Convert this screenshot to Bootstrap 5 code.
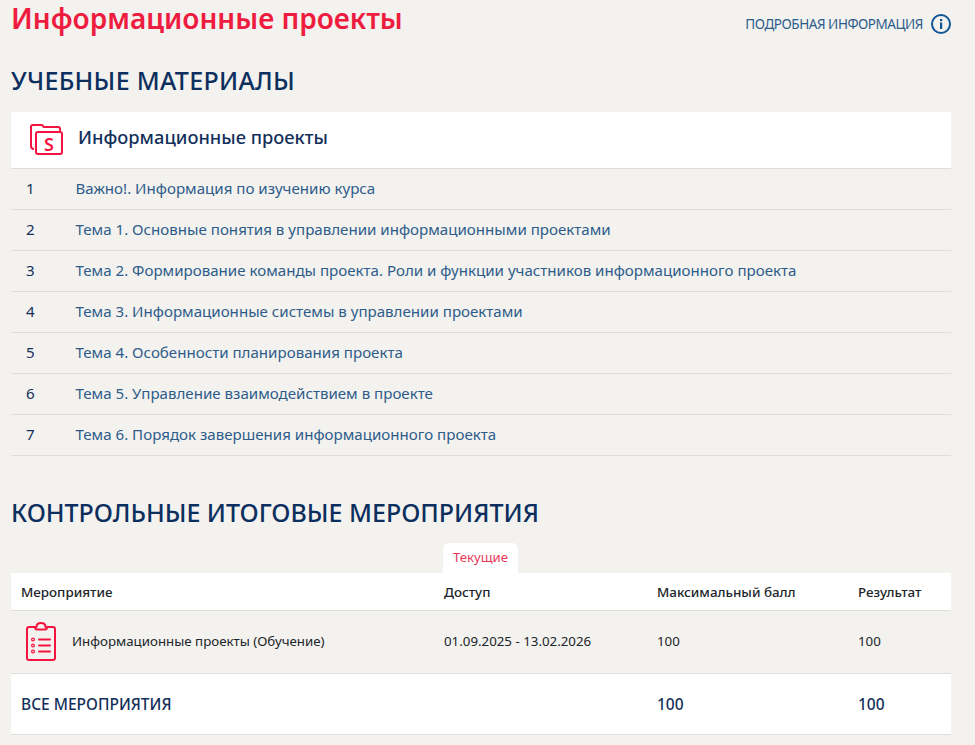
<!DOCTYPE html>
<html lang="ru">
<head>
<meta charset="utf-8">
<title>Информационные проекты</title>
<link href="https://cdn.jsdelivr.net/npm/bootstrap@5.3.0/dist/css/bootstrap.min.css" rel="stylesheet">
<style>
body{background:#f3f2ef;font-family:"Noto Sans",sans-serif;color:#212529;overflow:hidden;}
.page-wrap{padding:0 24px 0 11px;}
.top-bar{padding-bottom:27px;}
.page-title{font-size:28px;line-height:37px;font-weight:600;color:#ee1c3f;margin:0;}
.more-link{font-size:13.5px;letter-spacing:-.45px;color:#2e5c8a;text-decoration:none;margin-top:14px;}
.sec-title{font-size:25px;line-height:32px;font-weight:500;color:#0d2f5e;margin:0;}
.sec-first{margin-bottom:16px;letter-spacing:.3px;}
.sec-second{margin-top:40px;margin-bottom:15px;}
.mat-head{height:57px;background:#fff;border-bottom:1px solid #dfdedb;padding-left:19px;gap:15px;}
.mat-name{font-size:18.3px;font-weight:500;color:#14305a;margin-bottom:6px;}
.mat-row{height:41px;border-bottom:1px solid #dfdedb;font-size:15.1px;padding-bottom:2px;}
.mat-num{width:64.500px;padding-left:15px;color:#14305a;}
.mat-row a{color:#2e5c8a;text-decoration:none;}
.tab-pill{width:75px;height:30px;background:#fff;border-radius:6px 6px 0 0;color:#e8385a;font-size:13.200px;margin-left:432px;}
.res-table{table-layout:fixed;width:100%;margin:0;--bs-table-bg:transparent;font-size:13.300px;color:#212529;}
.res-table td,.res-table th{padding:0 0 0 10px;vertical-align:middle;border-bottom:1px solid #dfdedb;}
.res-table thead tr{height:37px;background:#fff;}
.res-table thead th{font-weight:500;font-size:13.400px;padding-top:1px;}
.res-table .row-main{height:63px;}
.res-table .row-main td+td{padding-top:1px;}
.res-table .row-total{height:61px;background:#fff;}
.res-table .row-total td{font-size:15.500px;font-weight:500;color:#14305a;padding-top:2px;}
.clip-cell{gap:16px;padding-left:5px;}
</style>
</head>
<body>
<div class="page-wrap">
  <div class="top-bar d-flex justify-content-between align-items-start">
    <h1 class="page-title">Информационные проекты</h1>
    <a href="#" class="more-link d-flex align-items-center gap-2">ПОДРОБНАЯ ИНФОРМАЦИЯ
      <svg width="20" height="20" viewBox="0 0 20 20"><circle cx="10" cy="10" r="9" fill="none" stroke="#0f5596" stroke-width="2"/><rect x="9" y="8.500" width="2.200" height="6.500" fill="#0f5596"/><rect x="9" y="5" width="2.200" height="2.200" fill="#0f5596"/></svg>
    </a>
  </div>
  <h2 class="sec-title sec-first">УЧЕБНЫЕ МАТЕРИАЛЫ</h2>
  <div class="mat-head d-flex align-items-center">
    <svg width="33" height="32" viewBox="0 0 33 32" fill="none" stroke="#f5143f" stroke-width="2" stroke-linejoin="round"><path d="M4 25c-2 0-3-1-3-3V3c0-1 .5-2 2-2h9l2 2h14c1.500 0 2 1 2 2v2"/><rect x="6" y="8" width="26" height="22" rx="2"/><text x="19" y="27" text-anchor="middle" font-family="Noto Sans" font-size="18" font-weight="600" fill="#f5143f" stroke="none">S</text></svg>
    <div class="mat-name">Информационные проекты</div>
  </div>
  <div class="mat-row d-flex align-items-center"><div class="mat-num">1</div><a href="#">Важно!. Информация по изучению курса</a></div>
  <div class="mat-row d-flex align-items-center"><div class="mat-num">2</div><a href="#">Тема 1. Основные понятия в управлении информационными проектами</a></div>
  <div class="mat-row d-flex align-items-center"><div class="mat-num">3</div><a href="#">Тема 2. Формирование команды проекта. Роли и функции участников информационного проекта</a></div>
  <div class="mat-row d-flex align-items-center"><div class="mat-num">4</div><a href="#">Тема 3. Информационные системы в управлении проектами</a></div>
  <div class="mat-row d-flex align-items-center"><div class="mat-num">5</div><a href="#">Тема 4. Особенности планирования проекта</a></div>
  <div class="mat-row d-flex align-items-center"><div class="mat-num">6</div><a href="#">Тема 5. Управление взаимодействием в проекте</a></div>
  <div class="mat-row d-flex align-items-center"><div class="mat-num">7</div><a href="#">Тема 6. Порядок завершения информационного проекта</a></div>
  <h2 class="sec-title sec-second">КОНТРОЛЬНЫЕ ИТОГОВЫЕ МЕРОПРИЯТИЯ</h2>
  <div class="tab-pill d-flex align-items-center justify-content-center">Текущие</div>
  <table class="table res-table">
    <colgroup><col style="width:423px"><col style="width:213px"><col style="width:201px"><col></colgroup>
    <thead><tr><th>Мероприятие</th><th>Доступ</th><th>Максимальный балл</th><th>Результат</th></tr></thead>
    <tbody>
      <tr class="row-main">
        <td><div class="clip-cell d-flex align-items-center">
          <svg width="30" height="39" viewBox="0 0 30 39" fill="none" stroke="#f5143f" stroke-width="2" stroke-linecap="round" stroke-linejoin="round"><path d="M9 5H3C1.800 5 1 5.800 1 7v29c0 1.300.7 2 2 2h24c1.300 0 2-.7 2-2V7c0-1.200-.8-2-2-2h-6c0 1.500-.5 2.500-2 2.500h-8C9.500 7.500 9 6.500 9 5z"/><path d="M10.500 5C10.500 2.500 12.500 1 15 1s4.500 1.500 4.500 4"/><circle cx="7" cy="17.500" r="1.400" stroke-width="1.200"/><circle cx="7" cy="23.500" r="1.400" stroke-width="1.200"/><circle cx="7" cy="29.500" r="1.400" stroke-width="1.200"/><path d="M13 17.500h11M13 23.500h11M13 29.500h11"/></svg>
          <span>Информационные проекты (Обучение)</span></div></td>
        <td>01.09.2025 - 13.02.2026</td><td>100</td><td>100</td>
      </tr>
      <tr class="row-total"><td>ВСЕ МЕРОПРИЯТИЯ</td><td></td><td>100</td><td>100</td></tr>
    </tbody>
  </table>
</div>
</body>
</html>
